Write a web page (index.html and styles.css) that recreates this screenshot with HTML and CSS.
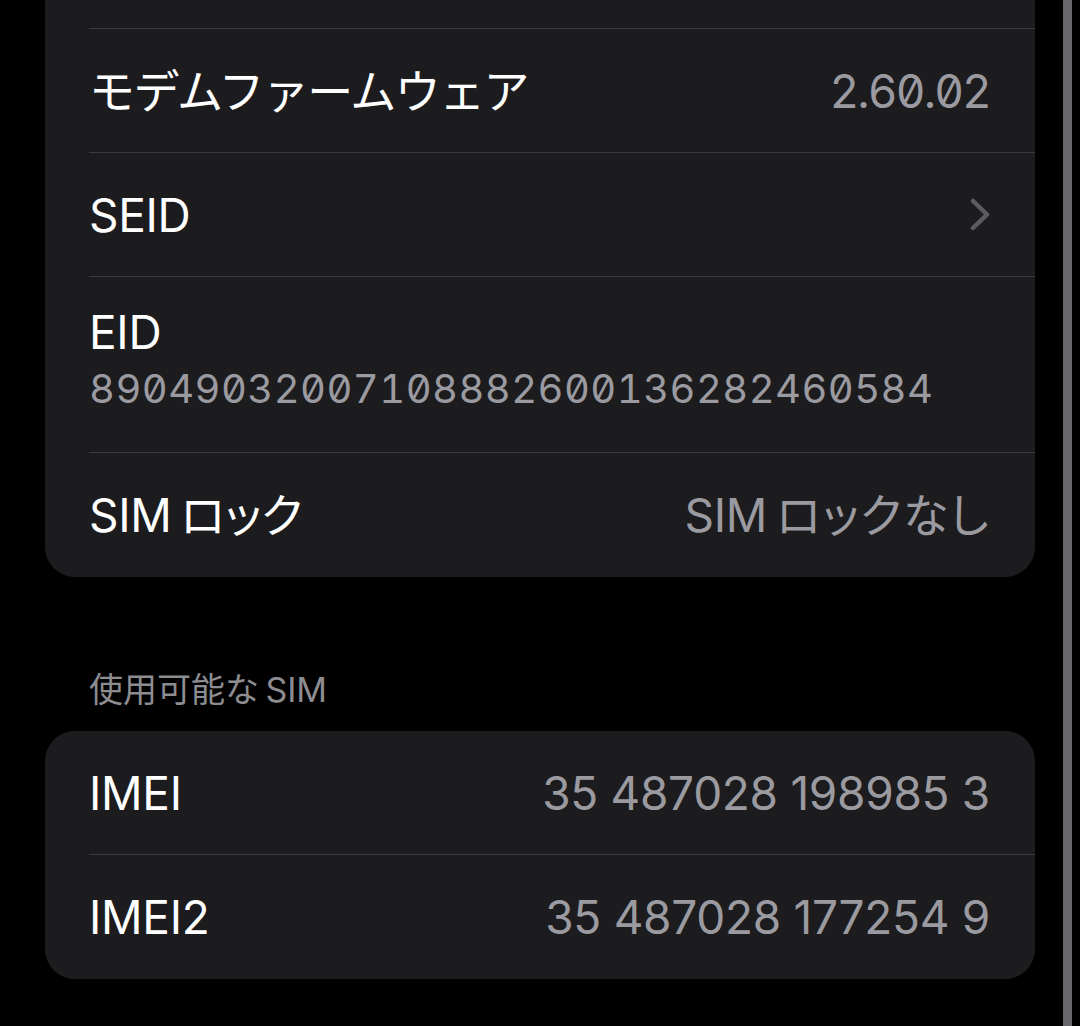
FILE: index.html
```html
<!DOCTYPE html>
<html lang="ja">
<head>
    <meta charset="UTF-8">
    <meta name="viewport" content="width=device-width, initial-scale=1.0">
    <title>情報</title>
    <link rel="stylesheet" href="styles.css">
</head>
<body>
    <div class="screen">
        <div class="card card-continued">
            <div class="row row-tail"><div class="row-body"></div></div>

            <div class="row">
                <div class="row-body">
                    <div class="label label-kana">モデムファームウェア</div>
                    <div class="value value-code">2.60.02</div>
                </div>
            </div>

            <div class="row">
                <div class="row-body">
                    <div class="label">SEID</div>
                    <svg class="chevron" width="20" height="33" viewBox="0 0 20 33">
                        <polyline points="3,3 17,16.5 3,30" fill="none" stroke="#5c5c60" stroke-width="4.5" stroke-linecap="round" stroke-linejoin="round"/>
                    </svg>
                </div>
            </div>

            <div class="row row-stacked">
                <div class="row-body">
                    <div class="label">EID</div>
                    <div class="subtitle value-code">89049032007108882600136282460584</div>
                </div>
            </div>

            <div class="row">
                <div class="row-body">
                    <div class="label">SIM<span class="ja">ロック</span></div>
                    <div class="value">SIM<span class="ja">ロックなし</span></div>
                </div>
            </div>
        </div>

        <div class="section-header">使用可能な<span class="latin">SIM</span></div>

        <div class="card">
            <div class="row">
                <div class="row-body">
                    <div class="label">IMEI</div>
                    <div class="value">35 487028 198985 3</div>
                </div>
            </div>
            <div class="row">
                <div class="row-body">
                    <div class="label">IMEI2</div>
                    <div class="value">35 487028 177254 9</div>
                </div>
            </div>
        </div>
    </div>

    <div class="scroll-indicator"></div>
</body>
</html>
```

FILE: styles.css
```css
* {
    margin: 0;
    padding: 0;
    box-sizing: border-box;
}

body {
    background-color: #000;
    color: #fff;
    font-family: Inter, "Noto Sans CJK JP", sans-serif;
    font-feature-settings: "palt";
    height: 1026px;
    overflow: hidden;
}

.screen {
    padding: 0 45px;
}

.card {
    background-color: #1c1c1e;
    border-radius: 30px;
}

.card-continued {
    border-top-left-radius: 0;
    border-top-right-radius: 0;
}

.row {
    padding-left: 44px;
}

.row-body {
    display: flex;
    justify-content: space-between;
    align-items: center;
    min-height: 124px;
    padding-right: 45px;
    border-bottom: 1px solid #3a3a3c;
}

.row:last-child .row-body {
    border-bottom: none;
}

.row-tail .row-body {
    min-height: 29px;
}

.row-stacked .row-body {
    flex-direction: column;
    align-items: flex-start;
    justify-content: flex-start;
    padding-top: 27px;
    padding-bottom: 34px;
}

.label {
    font-size: 46px;
    line-height: 56px;
    letter-spacing: -0.3px;
}

.label-kana {
    font-feature-settings: normal;
    letter-spacing: -1.6px;
}

.value {
    font-size: 46px;
    line-height: 56px;
    color: #9a9aa0;
    letter-spacing: -0.3px;
}

.value .ja {
    letter-spacing: 1.5px;
}

.value-code {
    font-feature-settings: "tnum", "zero";
}

.value.value-code {
    letter-spacing: -1.9px;
}

.subtitle {
    font-size: 40px;
    line-height: 58px;
    color: #9a9aa0;
    letter-spacing: 0.45px;
}

.ja {
    margin-left: 9px;
}

.latin {
    margin-left: 7px;
}

.chevron {
    display: block;
}

.section-header {
    font-size: 34px;
    line-height: 40px;
    color: #8c8c91;
    padding: 0 44px;
    margin: 93px 0 21px;
}

.scroll-indicator {
    position: fixed;
    top: -4px;
    bottom: -20px;
    right: 8px;
    width: 9px;
    border-radius: 5px;
    background-color: #67676a;
}
```
